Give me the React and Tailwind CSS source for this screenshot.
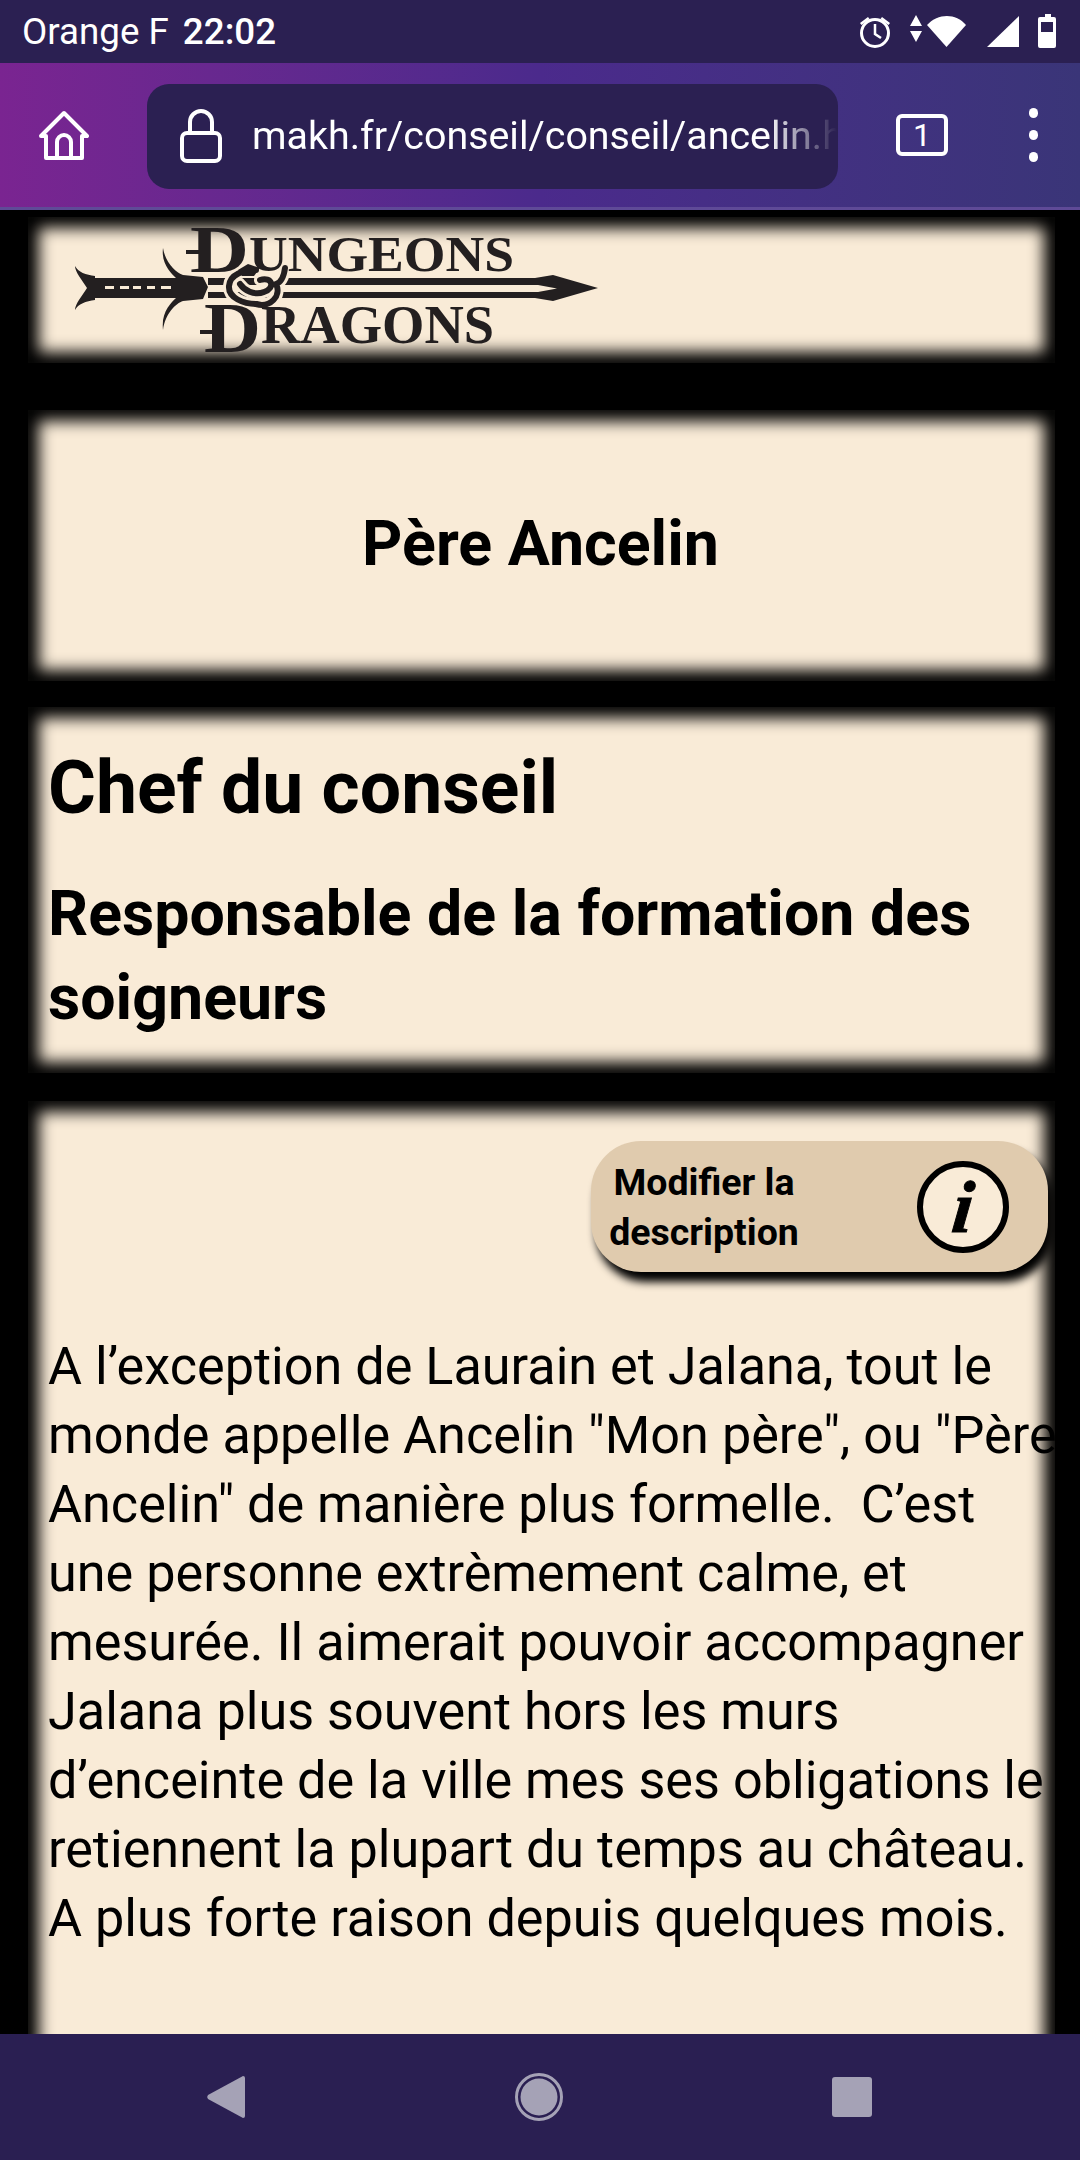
const lines = [
  "A l’exception de Laurain et Jalana, tout le",
  "monde appelle Ancelin \"Mon père\", ou \"Père",
  "Ancelin\" de manière plus formelle.\u00a0 C’est",
  "une personne extrèmement calme, et",
  "mesurée. Il aimerait pouvoir accompagner",
  "Jalana plus souvent hors les murs",
  "d’enceinte de la ville mes ses obligations le",
  "retiennent la plupart du temps au château.",
  "A plus forte raison depuis quelques mois.",
];

const cardClass =
  "bg-[#f9ebd7] shadow-[inset_0_0_15px_11px_#000] shrink-0";

function StatusBar() {
  return (
    <div className="h-[63px] bg-[#2b2052] flex items-center justify-between pl-[22px] pr-[21px] text-white text-[36.75px] shrink-0">
      <div className="flex gap-[14px]">
        <span>Orange F</span>
        <span className="font-medium">22:02</span>
      </div>
      <svg width="200" height="36" viewBox="0 0 200 36" fill="white">
        <circle cx="16" cy="19" r="13.5" fill="none" stroke="white" strokeWidth="3" />
        <path d="M16 10v10l6 4" fill="none" stroke="white" strokeWidth="2.5" />
        <path d="M1 9l8-6 1.5 2-8 6zM31 9l-8-6-1.5 2 8 6z" />
        <path d="M57 1l6 11H51zM57 28l6-11H51z" />
        <path d="M68 11C79 -1 97 -1 107 11L87.5 33z" />
        <path d="M160 2V33H128z" />
        <path d="M186 0h6v3h3a2 2 0 0 1 2 2V32a2 2 0 0 1-2 2H181a2 2 0 0 1-2-2V5a2 2 0 0 1 2-2h5z" />
        <rect x="182" y="8" width="12" height="10" fill="#2b2052" />
      </svg>
    </div>
  );
}

function Toolbar() {
  return (
    <div className="h-[147px] shrink-0 bg-gradient-to-r from-[#7a2491] via-[#4b2a8c] to-[#3a3578] border-b-[3px] border-[#5f4a97] flex items-center">
      <div className="w-[127px] mr-[20px] flex justify-center">
        <svg width="50" height="50" viewBox="0 0 50 50" fill="none" stroke="white" strokeWidth="4" strokeLinejoin="round">
          <path d="M2 26L25 3l23 23h-5v22H7V26z" />
          <path d="M18 48V32a7 7 0 0 1 14 0v16" />
        </svg>
      </div>
      <div className="w-[691px] h-[105px] mt-[2px] rounded-[22px] bg-[#2b2052] flex items-center pl-[33px] overflow-hidden">
        <svg width="42" height="54" viewBox="0 0 42 54" fill="none" stroke="white" strokeWidth="4" className="shrink-0">
          <rect x="2" y="24" width="38" height="28" rx="5" />
          <path d="M10 24V13a11 11 0 0 1 22 0v11" />
        </svg>
        <div className="ml-[30px] w-[585px] overflow-hidden whitespace-nowrap text-[39.4px] text-white [mask-image:linear-gradient(to_right,#000_88%,transparent_100%)]">
          makh.fr/conseil/conseil/ancelin.html
        </div>
      </div>
      <div className="ml-[58px] w-[52px] h-[42px] border-[4px] border-white rounded-[6px] flex items-center justify-center text-white text-[32px] leading-none">
        1
      </div>
      <div className="ml-[84px] -translate-x-[3px] flex flex-col gap-[12px]">
        <div className="w-[9px] h-[10px] rounded-full bg-white" />
        <div className="w-[9px] h-[10px] rounded-full bg-white" />
        <div className="w-[9px] h-[10px] rounded-full bg-white" />
      </div>
    </div>
  );
}

function Logo() {
  return (
    <svg width="540" height="132" viewBox="0 0 540 132" fill="#231f20" fontFamily="'Liberation Serif', serif" fontWeight="700" className="overflow-visible">
      {/* garde et poignée */}
      <path d="M7 42C10 48 18 51 27 52V54H108C103 49 93 40 95 24C97 38 108 49 115 51L135 53L140 63L135 75L115 77C108 79 97 90 95 106C93 88 103 79 108 74H27V76C18 77 10 80 7 86C7 80 14 72 19 64C14 56 7 48 7 42Z" />
      <rect x="37" y="62" width="9" height="3" fill="#f9ebd7" />
      <rect x="52" y="62" width="9" height="3" fill="#f9ebd7" />
      <rect x="65" y="62" width="8" height="3" fill="#f9ebd7" />
      <rect x="79" y="62" width="8" height="3" fill="#f9ebd7" />
      <rect x="93" y="62" width="10" height="3" fill="#f9ebd7" />
      {/* lame */}
      <path d="M140 54H467L485 51L530 64L485 77L467 74H140V68H470L489 64.5L470 61H140Z" />
      {/* dragon */}
      <g fill="none" strokeLinecap="round">
        <g stroke="#f9ebd7" strokeWidth="12">
          <path d="M188 46C176 46 162 50 161 62C160 74 176 80 188 80" />
          <path d="M192 56C204 52 208 64 196 68C186 72 176 66 172 60" />
          <path d="M188 80C202 84 214 72 208 60C214 58 216 52 217 44" />
        </g>
        <g stroke="#231f20" strokeWidth="6">
          <path d="M188 46C176 46 162 50 161 62C160 74 176 80 188 80" />
          <path d="M192 56C204 52 208 64 196 68C186 72 176 66 172 60" />
          <path d="M188 80C202 84 214 72 208 60C214 58 216 52 217 44" />
        </g>
      </g>
      <path d="M170 46L180 40L192 44L186 52L174 52Z" />
      {/* titre */}
      <rect x="118" y="26" width="22" height="4" />
      <rect x="132" y="106" width="22" height="4" />
      <text x="122" y="48" fontSize="68" textLength="59" lengthAdjust="spacingAndGlyphs">D</text>
      <text x="181" y="47" fontSize="51" textLength="265" lengthAdjust="spacingAndGlyphs">UNGEONS</text>
      <text x="136" y="128" fontSize="72" textLength="57" lengthAdjust="spacingAndGlyphs">D</text>
      <text x="193" y="119" fontSize="54" textLength="233" lengthAdjust="spacingAndGlyphs">RAGONS</text>
    </svg>
  );
}

function EditButton() {
  return (
    <div className="w-[457px] h-[131px] rounded-[50px] bg-[#e0cbae] shadow-[5px_10px_8px_#000] flex items-center justify-between pl-[18px] pr-[39px]">
      <div className="w-[190px] text-center text-[37.5px] leading-[50px] font-bold text-black">
        Modifier la description
      </div>
      <div className="w-[92px] h-[92px] rounded-full border-[6px] border-black bg-[#f9ebd7] flex items-center justify-center font-['Liberation_Serif',serif] italic font-bold text-[74px] leading-none text-black">
        <span className="-skew-x-6 [-webkit-text-stroke:1px_black]">i</span>
      </div>
    </div>
  );
}

function NavBar() {
  return (
    <div className="h-[126px] shrink-0 bg-[#2a1f52] flex items-center justify-between pl-[206px] pr-[208px]">
      <svg width="40" height="44" viewBox="0 0 40 44" fill="#a5a2b6">
        <path d="M37 1a2 2 0 0 1 2 2v38a2 2 0 0 1-2 2L2 24a3 3 0 0 1 0-4z" />
      </svg>
      <svg width="48" height="48" viewBox="0 0 48 48" fill="#a5a2b6">
        <circle cx="24" cy="24" r="22.5" fill="none" stroke="#a5a2b6" strokeWidth="3" />
        <circle cx="24" cy="24" r="18.5" />
      </svg>
      <div className="w-[40px] h-[40px] rounded-[3px] bg-[#a5a2b6]" />
    </div>
  );
}

export default function App() {
  return (
    <div className="w-[1080px] h-[2160px] flex flex-col overflow-hidden bg-black font-['Roboto',sans-serif]">
      <StatusBar />
      <Toolbar />
      <div className="flex-1 overflow-hidden flex flex-col pl-[28px] pr-[25px] pt-[7px] text-black">
        <div className={`${cardClass} h-[146px] pl-[40px] flex items-center`}>
          <Logo />
        </div>
        <div className={`${cardClass} mt-[47px] h-[271px] flex items-center justify-center`}>
          <h1 className="text-[62.7px] font-bold -mt-[3px] -ml-[2px]">Père Ancelin</h1>
        </div>
        <div className={`${cardClass} mt-[26px] h-[366px] px-[20px] pt-[39px]`}>
          <h2 className="text-[73.3px] font-bold leading-[84px]">Chef du conseil</h2>
          <h3 className="mt-[42px] text-[62.7px] font-bold leading-[84px]">
            Responsable de la formation des soigneurs
          </h3>
        </div>
        <div className={`${cardClass} mt-[28px] h-[1000px] pl-[20px] pt-[40px]`}>
          <div className="flex justify-end mr-[7px]">
            <EditButton />
          </div>
          <p className="mt-[60px] text-[52.2px] leading-[69px] whitespace-nowrap">
            {lines.map((l) => (
              <span key={l} className="block">{l}</span>
            ))}
          </p>
        </div>
      </div>
      <NavBar />
    </div>
  );
}
